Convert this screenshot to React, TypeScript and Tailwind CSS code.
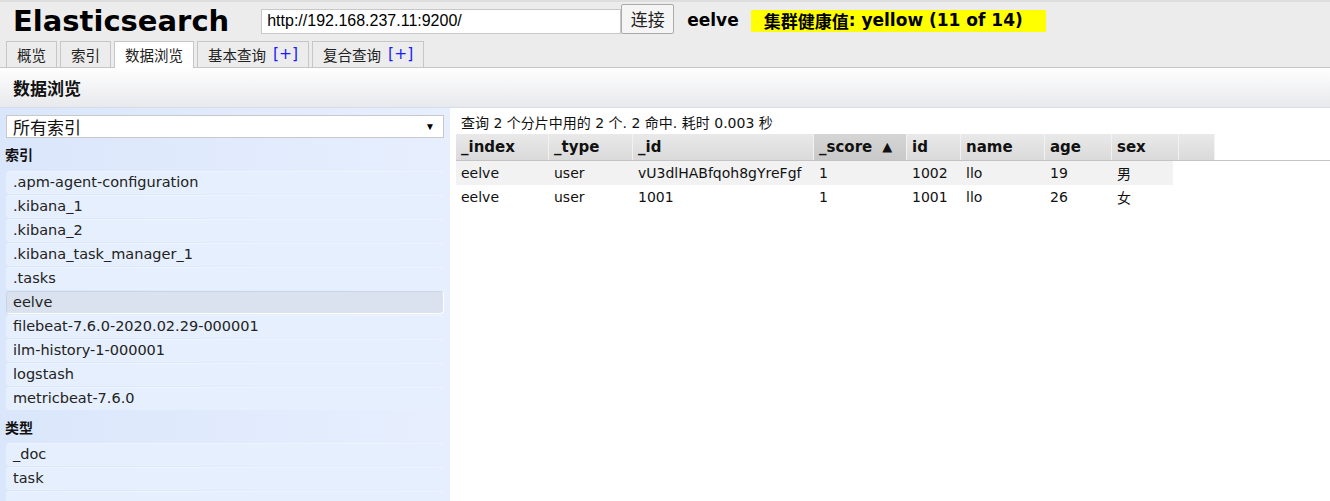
import React from 'react';

const latin = "font-['DejaVu_Sans','Noto_Sans_CJK_SC',sans-serif]";
const cjk = "font-['Noto_Sans_CJK_SC','DejaVu_Sans',sans-serif]";

const indices = [
  '.apm-agent-configuration',
  '.kibana_1',
  '.kibana_2',
  '.kibana_task_manager_1',
  '.tasks',
  'eelve',
  'filebeat-7.6.0-2020.02.29-000001',
  'ilm-history-1-000001',
  'logstash',
  'metricbeat-7.6.0',
];

const types = ['_doc', 'task', ''];

const columns = [
  { label: '_index', w: 'w-[93px]' },
  { label: '_type', w: 'w-[84px]' },
  { label: '_id', w: 'w-[181px]' },
  { label: '_score', w: 'w-[93px]', sorted: true },
  { label: 'id', w: 'w-[54px]' },
  { label: 'name', w: 'w-[84px]' },
  { label: 'age', w: 'w-[67px]' },
  { label: 'sex', w: 'w-[67px]' },
  { label: '', w: 'w-[36px]' },
];

const rows = [
  ['eelve', 'user', 'vU3dlHABfqoh8gYreFgf', '1', '1002', 'llo', '19', '男'],
  ['eelve', 'user', '1001', '1', '1001', 'llo', '26', '女'],
];

const cellW = ['w-[93px]', 'w-[84px]', 'w-[181px]', 'w-[93px]', 'w-[54px]', 'w-[84px]', 'w-[67px]', 'w-[61px]'];

function Tab({ label, plus, active }: { label: string; plus?: boolean; active?: boolean }) {
  return (
    <div
      className={`px-[10px] border border-[#c6c6c6] border-b-0 flex items-center text-[14.5px] text-[#222] ${cjk} ${
        active ? 'bg-white h-[27px] -mb-px relative' : 'bg-[#ececec] h-[26px]'
      }`}
    >
      {label}
      {plus && <span className={`ml-[7px] text-[15.5px] text-[#1a1aff] ${latin}`}>[+]</span>}
    </div>
  );
}

function ListItem({ text, selected }: { text: string; selected?: boolean }) {
  return (
    <div
      className={`h-[23px] mb-px flex items-center rounded-[4px] text-[14.5px] text-[#222] ${latin} ${
        selected
          ? 'bg-[#d9e2ee] border border-[#c9d4e4] border-b-white border-r-white pl-[6px]'
          : 'bg-[#e6effd] border-t border-[#eef4fe] pl-[7px]'
      }`}
    >
      {text}
    </div>
  );
}

export default function App() {
  return (
    <div className="h-screen overflow-hidden bg-white flex flex-col">
      {/* Header */}
      <header className="bg-[#ececec] border-t-2 border-[#dedede]">
        <div className="flex items-center h-[38px] pl-[13px]">
          <h1 className={`text-[29px] font-bold text-black leading-none mr-[32px] ${latin}`}>Elasticsearch</h1>
          <div className="w-[360px] h-[25px] bg-white border border-[#c8c8c8] flex items-center pl-[5px] text-[16px] text-black font-['Liberation_Sans',Arial,sans-serif]">
            http://192.168.237.11:9200/
          </div>
          <button
            className={`h-[30px] w-[53px] -mt-[5px] bg-[#f5f5f5] border border-[#aaa] rounded-[2px] text-[17px] text-[#222] ${cjk}`}
          >
            连接
          </button>
          <span className={`ml-[13px] text-[17px] font-bold text-black ${latin}`}>eelve</span>
          <span
            className={`ml-[12px] h-[22px] pl-[13px] pr-[13px] w-[295px] bg-[#ffff00] flex items-center text-[17px] font-bold text-black ${latin}`}
          >
            <span className={`font-bold ${cjk}`}>集群健康值</span>: yellow (11 of 14)
          </span>
        </div>
        <div className="flex items-end gap-[3px] pl-[6px] pt-[2px] h-[27px]">
          <Tab label="概览" />
          <Tab label="索引" />
          <Tab label="数据浏览" active />
          <Tab label="基本查询" plus />
          <Tab label="复合查询" plus />
        </div>
      </header>

      {/* Section title */}
      <div className="h-[41px] border-t border-[#c6c6c6] border-b border-b-[#d6dde8] bg-gradient-to-b from-[#fefefe] to-[#e8e9ec] flex items-center pl-[13px]">
        <h2 className={`text-[17px] font-bold text-[#111] ${cjk}`}>数据浏览</h2>
      </div>

      {/* Body */}
      <div className="flex flex-1 min-h-0">
        <aside className="w-[450px] shrink-0 bg-gradient-to-r from-[#dae6fb] to-[#e7effe] px-[6px] pt-[7px]">
          <div className="h-[23px] bg-white border border-[#c8c8c8] flex items-center justify-between pl-[6px] pr-[8px]">
            <span className={`text-[17px] text-[#111] leading-none ${cjk}`}>所有索引</span>
            <span className="text-[10px] text-black">▼</span>
          </div>
          <div className={`h-[33px] flex items-center text-[14px] font-bold text-[#111] -ml-px ${cjk}`}>索引</div>
          {indices.map((i) => (
            <ListItem key={i} text={i} selected={i === 'eelve'} />
          ))}
          <div className={`h-[32px] flex items-center text-[14px] font-bold text-[#111] -ml-px ${cjk}`}>类型</div>
          {types.map((t, n) => (
            <ListItem key={n} text={t} />
          ))}
        </aside>

        <main className="flex-1 pl-[6px] pt-[4px]">
          <div className={`text-[14px] text-[#111] pl-[5px] h-[22px] flex items-center ${latin}`}>
            查询 2 个分片中用的 2 个. 2 命中. 耗时 0.003 秒
          </div>
          <div className="flex h-[27px] border-b border-[#c4c4c4]">
            {columns.map((c, i) => (
              <div
                key={i}
                className={`${c.w} flex items-center pl-[5px] border-r border-[#f2f2f2] text-[15px] font-bold text-[#111] ${latin} ${
                  c.sorted
                    ? 'bg-gradient-to-b from-[#d6d6d6] to-[#c9c9c9]'
                    : 'bg-gradient-to-b from-[#e9e9e9] to-[#dadada]'
                }`}
              >
                {c.label}
                {c.sorted && <span className="ml-[10px] text-[13px]">▲</span>}
              </div>
            ))}
          </div>
          {rows.map((r, ri) => (
            <div key={ri} className={`flex h-[24px] w-[717px] ${ri === 0 ? 'bg-[#f2f2f2]' : 'bg-white'}`}>
              {r.map((v, ci) => (
                <div
                  key={ci}
                  className={`${cellW[ci]} flex items-center pl-[5px] text-[14px] text-[#111] whitespace-nowrap ${
                    ci === 7 ? cjk : latin
                  }`}
                >
                  {v}
                </div>
              ))}
            </div>
          ))}
        </main>
      </div>
    </div>
  );
}
